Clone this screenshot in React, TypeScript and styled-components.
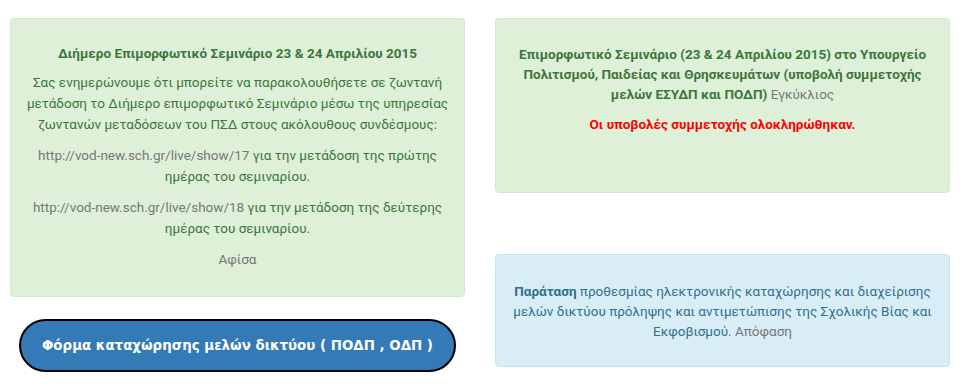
import React from 'react'
import styled, { createGlobalStyle } from 'styled-components'

const GlobalStyle = createGlobalStyle`
  html, body {
    margin: 0;
    padding: 0;
    background: #ffffff;
  }
  body {
    font-family: Roboto, 'Liberation Sans', sans-serif;
    font-size: 13.5px;
    color: #333333;
  }
`

const Page = styled.div`
  display: grid;
  grid-template-columns: 455px 455px;
  column-gap: 30px;
  padding: 18px 0 0 10px;
`

const Column = styled.div`
  display: flex;
  flex-direction: column;
`

const Alert = styled.div<{ $kind: 'success' | 'info'; $lh: number }>`
  box-sizing: border-box;
  border: 1px solid ${(p) => (p.$kind === 'success' ? '#d6e9c6' : '#bce8f1')};
  background: ${(p) => (p.$kind === 'success' ? '#dff0d8' : '#d9edf7')};
  color: ${(p) => (p.$kind === 'success' ? '#3c763d' : '#31708f')};
  border-radius: 4px;
  text-align: center;
  line-height: ${(p) => p.$lh}px;
  font-size: 13.5px;
`

const NewsAlert = styled(Alert)`
  padding: 24px 14px 16px;
`

const CircularAlert = styled(Alert)`
  height: 175px;
  padding: 25px 14px 0;
`

const ExtensionAlert = styled(Alert)`
  margin-top: 61px;
  height: 113px;
  padding: 26px 14px 0;
`

const Para = styled.p<{ $bold?: boolean }>`
  margin: 0 0 10px;
  font-weight: ${(p) => (p.$bold ? 700 : 400)};
`

const Heading = styled(Para)`
  margin-bottom: 8px;
`

const Link = styled.a`
  color: #777777;
  text-decoration: none;
  font-weight: 400;
`

const Closed = styled(Para)`
  color: #ff0000;
  font-weight: 700;
`

const FormButton = styled.button`
  margin: 22px 9px 0;
  height: 53px;
  border: 2px solid #000000;
  border-radius: 27px;
  background: #337ab7;
  color: #ffffff;
  font-family: 'DejaVu Sans', Verdana, sans-serif;
  font-weight: 700;
  font-size: 13.4px;
  cursor: pointer;
`

export default function App() {
  return (
    <>
      <GlobalStyle />
      <Page>
        <Column>
          <NewsAlert $kind="success" $lh={21}>
            <Heading $bold>Διήμερο Επιμορφωτικό Σεμινάριο 23 &amp; 24 Απριλίου 2015</Heading>
            <Para>
              Σας ενημερώνουμε ότι μπορείτε να παρακολουθήσετε σε ζωντανή μετάδοση το Διήμερο
              επιμορφωτικό Σεμινάριο μέσω της υπηρεσίας ζωντανών μεταδόσεων του ΠΣΔ στους
              ακόλουθους συνδέσμους:
            </Para>
            <Para>
              <Link href="#">http://vod-new.sch.gr/live/show/17</Link> για την μετάδοση της
              πρώτης ημέρας του σεμιναρίου.
            </Para>
            <Para>
              <Link href="#">http://vod-new.sch.gr/live/show/18</Link> για την μετάδοση της
              δεύτερης ημέρας του σεμιναρίου.
            </Para>
            <Para>
              <Link href="#">Αφίσα</Link>
            </Para>
          </NewsAlert>
          <FormButton>Φόρμα καταχώρησης μελών δικτύου ( ΠΟΔΠ , ΟΔΠ )</FormButton>
        </Column>
        <Column>
          <CircularAlert $kind="success" $lh={20}>
            <Para $bold>
              Επιμορφωτικό Σεμινάριο (23 &amp; 24 Απριλίου 2015) στο Υπουργείο Πολιτισμού,
              Παιδείας και Θρησκευμάτων (υποβολή συμμετοχής μελών ΕΣΥΔΠ και ΠΟΔΠ){' '}
              <Link href="#">Εγκύκλιος</Link>
            </Para>
            <Closed>Οι υποβολές συμμετοχής ολοκληρώθηκαν.</Closed>
          </CircularAlert>
          <ExtensionAlert $kind="info" $lh={20}>
            <Para>
              <b>Παράταση</b> προθεσμίας ηλεκτρονικής καταχώρησης και διαχείρισης μελών δικτύου
              πρόληψης και αντιμετώπισης της Σχολικής Βίας και Εκφοβισμού.{' '}
              <Link href="#">Απόφαση</Link>
            </Para>
          </ExtensionAlert>
        </Column>
      </Page>
    </>
  )
}
